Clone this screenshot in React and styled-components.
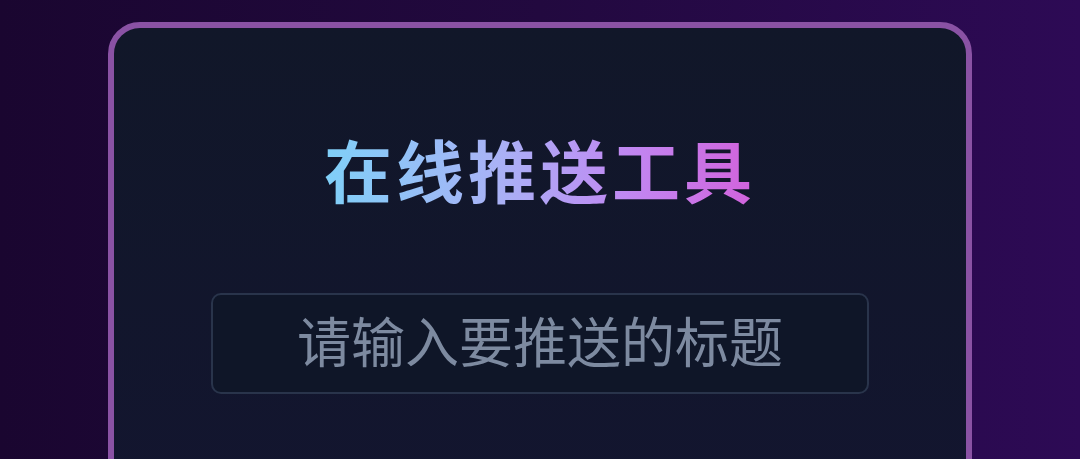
import React from "react"
import styled, { createGlobalStyle } from "styled-components"

const GlobalStyle = createGlobalStyle`
    html, body {
        margin: 0;
        padding: 0;
        height: 100%;
        overflow: hidden;
    }
    body {
        font-family: "Noto Sans CJK SC", "Noto Sans", sans-serif;
        background: linear-gradient(90deg, #1a0630 0%, #22093f 50%, #2d0a55 100%);
    }
`

const Page = styled.div`
    min-height: 100vh;
    display: flex;
    justify-content: center;
    padding-top: 22px;
    box-sizing: border-box;
`

const Card = styled.div`
    width: 864px;
    height: 560px;
    box-sizing: border-box;
    border: 6px solid #8a52a4;
    border-radius: 32px;
    background: linear-gradient(180deg, #111729 0%, #131530 100%);
    display: flex;
    flex-direction: column;
    align-items: center;
    padding-top: 100px;
`

const Title = styled.h1`
    margin: 0;
    font-size: 68px;
    font-weight: 700;
    line-height: 1.2;
    letter-spacing: 4px;
    background: linear-gradient(90deg, #7fd0f8 0%, #a9b2f6 40%, #c088f2 70%, #d262dc 100%);
    -webkit-background-clip: text;
    background-clip: text;
    color: transparent;
`

const Input = styled.input`
    margin-top: 83px;
    width: 658px;
    height: 101px;
    box-sizing: border-box;
    padding: 0 0 8px;
    border: 2px solid #29344b;
    border-radius: 10px;
    background: #0f1628;
    color: #cbd5e1;
    font-family: "Noto Sans CJK SC", "Noto Sans", sans-serif;
    font-size: 54px;
    text-align: center;
    outline: none;

    &::placeholder {
        color: #7d8aa0;
    }
`

export default function App() {
    return (
        <>
            <GlobalStyle />
            <Page>
                <Card>
                    <Title>在线推送工具</Title>
                    <Input placeholder="请输入要推送的标题" />
                </Card>
            </Page>
        </>
    )
}
